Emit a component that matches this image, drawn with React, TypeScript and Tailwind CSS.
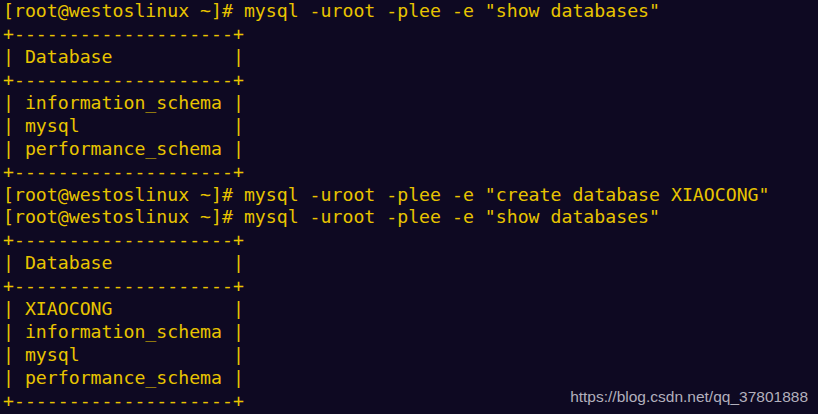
import React from 'react';

const LINES = [
  '[root@westoslinux ~]# mysql -uroot -plee -e "show databases"',
  '+--------------------+',
  '| Database           |',
  '+--------------------+',
  '| information_schema |',
  '| mysql              |',
  '| performance_schema |',
  '+--------------------+',
  '[root@westoslinux ~]# mysql -uroot -plee -e "create database XIAOCONG"',
  '[root@westoslinux ~]# mysql -uroot -plee -e "show databases"',
  '+--------------------+',
  '| Database           |',
  '+--------------------+',
  '| XIAOCONG           |',
  '| information_schema |',
  '| mysql              |',
  '| performance_schema |',
  '+--------------------+',
];

export default function App() {
  return (
    <div className="relative w-[818px] h-[414px] overflow-hidden bg-[#0e0922]">
      <div className="flex flex-col items-start pl-[3px] font-['DejaVu_Sans_Mono',monospace] text-[18.2px] leading-[22.94px] text-[#e8c400]">
        {LINES.map((line, i) => (
          <div key={i} className="whitespace-pre">{line}</div>
        ))}
      </div>
      {/* csdn watermark */}
      <div className="absolute right-[10px] top-[385px] font-['Liberation_Sans',Arial,sans-serif] text-[15.5px] text-[#b3b0bd]">
        https://blog.csdn.net/qq_37801888
      </div>
    </div>
  );
}
